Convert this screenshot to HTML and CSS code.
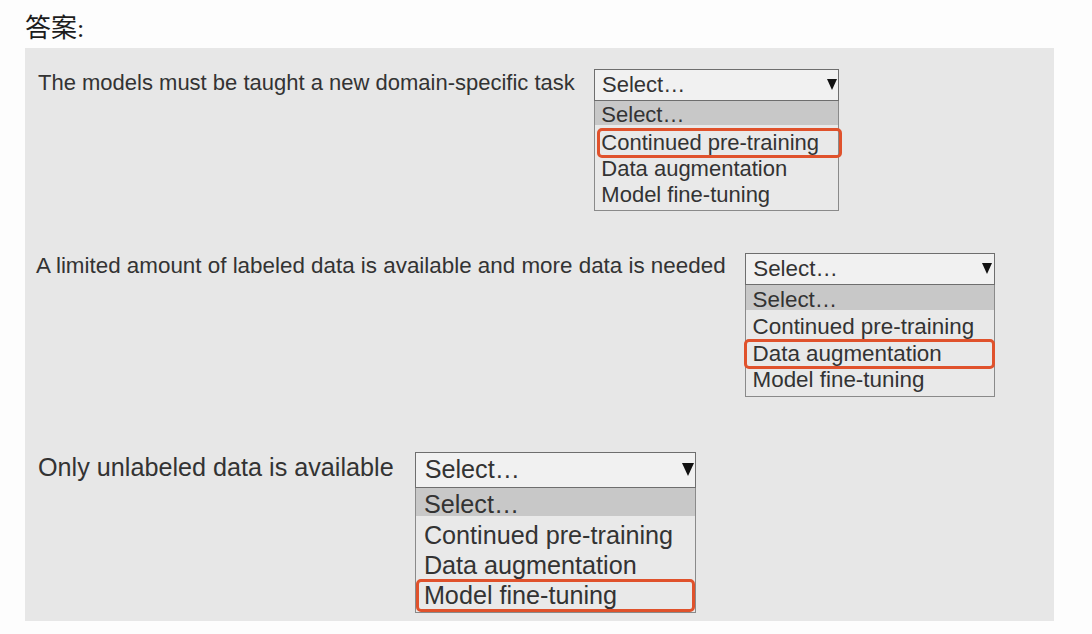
FILE: index.html
```html
<!DOCTYPE html>
<html lang="zh">
<head>
<meta charset="utf-8">
<title>答案</title>
<link rel="stylesheet" href="styles.css">
</head>
<body>
<div class="page">
  <h1 class="title">答案:</h1>
  <div class="panel">
    <div class="row row-1">
      <div class="label">The models must be taught a new domain-specific task</div>
      <div class="dropdown">
        <div class="select"><span class="select-text">Select…</span><span class="arrow"></span></div>
        <ul class="options">
          <li class="option option-head">Select…</li>
          <li class="option is-answer">Continued pre-training</li>
          <li class="option">Data augmentation</li>
          <li class="option">Model fine-tuning</li>
        </ul>
      </div>
    </div>
    <div class="row row-2">
      <div class="label">A limited amount of labeled data is available and more data is needed</div>
      <div class="dropdown">
        <div class="select"><span class="select-text">Select…</span><span class="arrow"></span></div>
        <ul class="options">
          <li class="option option-head">Select…</li>
          <li class="option">Continued pre-training</li>
          <li class="option is-answer">Data augmentation</li>
          <li class="option">Model fine-tuning</li>
        </ul>
      </div>
    </div>
    <div class="row row-3">
      <div class="label">Only unlabeled data is available</div>
      <div class="dropdown">
        <div class="select"><span class="select-text">Select…</span><span class="arrow"></span></div>
        <ul class="options">
          <li class="option option-head">Select…</li>
          <li class="option">Continued pre-training</li>
          <li class="option">Data augmentation</li>
          <li class="option is-answer">Model fine-tuning</li>
        </ul>
      </div>
    </div>
  </div>
</div>
</body>
</html>
```

FILE: styles.css
```css
* { box-sizing: border-box; }

html, body {
  margin: 0;
  padding: 0;
  background: #fdfdfd;
}

.page {
  width: 1092px;
  height: 634px;
  overflow: hidden;
}

.title {
  margin: 14px 0 4px 25px;
  height: 30px;
  font-family: "Liberation Serif", "Noto Sans CJK SC", serif;
  font-weight: 400;
  font-size: 26px;
  line-height: 30px;
  color: #1c1c1c;
}

.panel {
  margin-left: 25px;
  width: 1029px;
  background: #e7e7e7;
  padding: 21px 0 8px 13px;
  font-family: "Liberation Sans", Arial, sans-serif;
  color: #333;
}

.row {
  display: flex;
  align-items: flex-start;
  gap: 0.86em;
}

.row-1 { font-size: 22px; }
.row-2 { font-size: 22.4px; margin-top: 42px; margin-left: -2px; }
.row-3 { font-size: 25.2px; margin-top: 55px; }

.label {
  flex: none;
  white-space: nowrap;
  line-height: 1.45em;
  margin-top: -0.1em;
}

.dropdown {
  flex: none;
  width: 11.15em;
}

.select {
  height: 1.45em;
  display: flex;
  align-items: center;
  justify-content: space-between;
  background: #f1f1f1;
  border: 1px solid #6e6e6e;
  padding: 0 0.06em 0 0.33em;
  white-space: nowrap;
}

.arrow {
  width: 0;
  height: 0;
  border-left: 0.24em solid transparent;
  border-right: 0.24em solid transparent;
  border-top: 0.52em solid #111;
  margin-bottom: 0.04em;
}

.options {
  list-style: none;
  margin: 0;
  padding: 0 0 2px 0;
  background: #e9e9e9;
  border: 1px solid #8a8a8a;
  border-top: none;
}

.option {
  position: relative;
  height: 1.18em;
  line-height: 1.18em;
  padding-left: 0.3em;
  white-space: nowrap;
}

.option-head {
  height: 1.1em;
  line-height: 1.3em;
  margin-bottom: 0.21em;
  background: #c8c8c8;
}

.is-answer::after {
  content: "";
  position: absolute;
  top: -2px;
  bottom: -2px;
  left: -2px;
  right: -1px;
  border: 3px solid #e0522c;
  border-radius: 5px;
}

.row-1 .is-answer::after { left: 2px; right: -4px; }
.row-3 .is-answer::after { left: 0; right: 0; }
```
